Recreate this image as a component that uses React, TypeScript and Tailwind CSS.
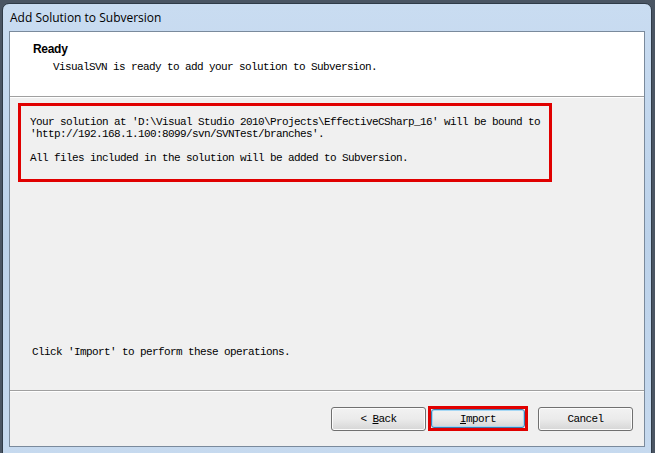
const mono = "font-['Liberation_Mono','DejaVu_Sans_Mono',monospace] text-[11px] tracking-[-0.6px] leading-[12px] text-black"

function WizardButton({
  children, focused,
}: {
  children: React.ReactNode
  focused?: boolean
}) {
  return (
    <button
      className={
        'rounded-[3px] border bg-gradient-to-b from-[#f2f2f2] via-[#ebebeb] to-[#d6d6d6] flex items-center justify-center whitespace-pre ' +
        mono +
        (focused
          ? ' h-[19px] w-[94px] border-[#3c7fb1] shadow-[inset_0_0_0_1px_#a6d8f5]'
          : ' h-[24px] w-[95px] border-[#707070] shadow-[inset_0_0_0_1px_#fcfcfc]')
      }
    >
      {children}
    </button>
  )
}

export default function App() {
  return (
    <div className="w-[655px] h-[453px] overflow-hidden bg-[#4a5563]">
      <div className="ml-[2px] mt-[3px] w-[650px] h-[470px] rounded-t-[7px] border border-[#2f3b48] bg-gradient-to-b from-[#c9dcf1] via-[#bcd2ea] to-[#c7daef] flex flex-col">
        <div className="h-[27px] flex items-center pl-[7px] font-['Open_Sans','Noto_Sans',sans-serif] text-[12px] text-black">
          Add Solution to Subversion
        </div>
        <div className="ml-[6px] w-[636px] h-[416px] border border-[#7a8a9c] flex flex-col bg-[#f0f0f0]">
          <div className="h-[65px] bg-white border-b border-[#a0a0a0] pl-[23px] pt-[10px]">
            <div className="font-['Liberation_Sans','Arial',sans-serif] font-bold text-[12px] leading-[14px] tracking-[-0.3px] text-black">
              Ready
            </div>
            <div className={mono + ' mt-[5px] pl-[20px]'}>
              VisualSVN is ready to add your solution to Subversion.
            </div>
          </div>
          <div className="h-[293px] border-t border-white flex flex-col pl-[8px] pt-[5px]">
            <div className="w-[534px] h-[79px] border-[3px] border-[#e00000] pl-[9px] pt-[10px]">
              <div className={mono + ' whitespace-pre'}>
                {"Your solution at 'D:\\Visual Studio 2010\\Projects\\EffectiveCSharp_16' will be bound to\n'http://192.168.1.100:8099/svn/SVNTest/branches'.\n\nAll files included in the solution will be added to Subversion."}
              </div>
            </div>
            <div className="flex-1" />
            <div className={mono + ' pl-[14px] mb-[32px]'}>
              Click 'Import' to perform these operations.
            </div>
          </div>
          <div className="border-t border-[#a0a0a0]" />
          <div className="border-t border-white flex-1 flex items-start pt-[15px] pl-[321px]">
            <WizardButton>
              {'< '}<span className="underline">B</span>ack
            </WizardButton>
            <div className="ml-[2px] mt-[-1px] w-[100px] h-[25px] border-[3px] border-[#e00000]">
              <WizardButton focused>
                <span className="underline">I</span>mport
              </WizardButton>
            </div>
            <div className="ml-[10px]">
              <WizardButton>Cancel</WizardButton>
            </div>
          </div>
        </div>
      </div>
    </div>
  )
}
